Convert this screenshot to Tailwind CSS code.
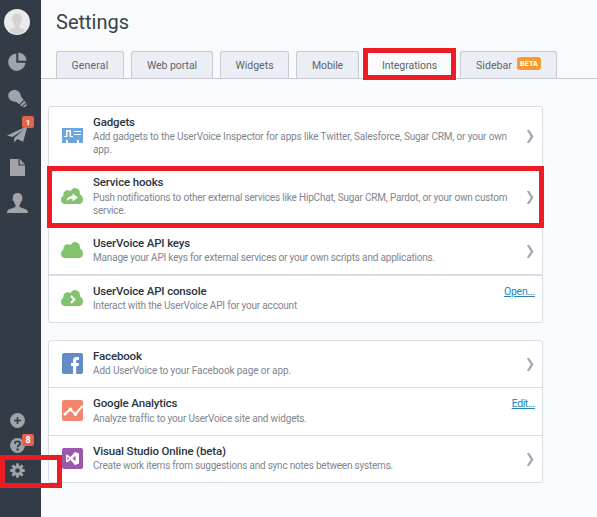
<!DOCTYPE html>
<html lang="en">
<head>
<meta charset="utf-8">
<title>Settings</title>
<script src="https://cdn.jsdelivr.net/npm/@tailwindcss/browser@4"></script>
</head>
<body class="w-[597px] h-[517px] overflow-hidden bg-[#f9fafc] font-['Roboto','Open_Sans',sans-serif] text-[#2f3a45]">
<svg class="hidden">
  <symbol id="cloud" viewBox="0 0 22 16"><path d="M4 16C1.500 16 0 14.300 0 11.800C0 9.700 1 8.300 2.500 7.800C2 4.800 3.500 2.300 6.500 2.200C7.900 2.100 8.900 2.500 9.800 3C10.600 1 12 0 14 0C17.300 0 19.400 2.800 18.900 6.400C20.900 7.200 22 9 22 11.500C22 14.200 20.600 16 18 16Z" fill="#84c36e"/></symbol>
  <symbol id="chev" viewBox="0 0 8 14"><path d="M.8 0H3.300L7.500 6.500L3.300 13H.8L4.600 6.500Z" fill="#a4a9b1"/></symbol>
</svg>
<div class="flex h-full">
  <nav class="w-[41px] shrink-0 bg-[#323b46] flex flex-col items-start">
    <svg class="mt-[9px] ml-1 w-[26px] h-[26px]" viewBox="0 0 26 26"><circle cx="13" cy="13" r="13" fill="#ebebeb"/><path d="M13 4.500C9.700 4.500 8 6.500 8.200 9.500C7.700 10.500 8.200 12 8.900 12.700C9.200 14.300 10 15.400 10.800 16.300V18.500L5.300 20.500C6 23 9 25.200 13 25.200S20 23 20.700 20.500L15.300 18.500V16.300C16.100 15.400 16.900 14.300 17.200 12.700C17.900 12 18.300 10.500 17.800 9.500C18 6.500 16.300 4.500 13 4.500Z" fill="#d3d3d3"/></svg>
    <svg class="mt-[17px] ml-2 w-[19px] h-[19px]" viewBox="0 0 19 19" fill="#a0a4a8"><path d="M8.300 1.500V10.700H17.500A8.700 8.700 0 1 1 8.300 1.500Z"/><path d="M10.300 .5A8.300 8.300 0 0 1 18.500 8.700H10.300Z"/></svg>
    <svg class="mt-[18px] ml-2 w-[19px] h-[19px]" viewBox="0 0 19 19" fill="#a0a4a8"><path d="M6.500 1C10 1 12.500 3.500 12.800 6.500C13.100 8.300 14.600 9.500 15.800 10.700L11.200 15.500C10 14 8.600 12.800 6.700 12.700C3 12.300 .2 9.800 .2 6.800C.2 3.500 3 1 6.500 1Z"/><path d="M16.300 11.700L17.900 13.200L13.700 17.600L12.100 16.200ZM18.500 14L18.700 16.300L16.800 18.300L14.500 18.200Z"/></svg>
    <div class="relative mt-[17px] ml-[7px] w-[21px] h-[18px]">
      <svg class="w-[21px] h-[18px]" viewBox="0 0 21 18" fill="#a0a4a8"><path d="M20.500 1L0 10.500L5.500 12L17 4.200L7.200 13V17.500L10.200 14L16.200 16.800Z"/></svg>
      <span class="absolute left-[15px] top-[-9px] w-3 h-3 rounded-[2px] bg-[#e2634b] text-white text-[8px] leading-[13px] font-bold text-center">1</span>
    </div>
    <svg class="mt-[16px] ml-[10px] w-[15px] h-[17px]" viewBox="0 0 15 17" fill="#a0a4a8"><path d="M0 0H8.500V6.500H15V17H0Z"/><path d="M9.700 0L15 5.400H9.700Z"/></svg>
    <svg class="mt-[17px] ml-[7px] w-[21px] h-5" viewBox="0 0 21 20" fill="#a0a4a8"><path d="M10.500 0C7.500 0 5.700 1.800 5.800 4.500C5.300 6.500 6 8 6.900 8.600C7.200 10.200 8 11.300 8.500 12V14L2.300 16.200C.7 16.900 0 18 0 20H21C21 18 20.300 16.900 18.700 16.200L12.500 14V12C13.100 11.300 13.800 10.200 14.100 8.600C15 8 15.700 6.500 15.200 4.500C15.300 1.800 13.500 0 10.500 0Z"/></svg>
    <svg class="mt-auto ml-[10px] w-[15px] h-[15px]" viewBox="0 0 15 15"><circle cx="7.500" cy="7.500" r="7.400" fill="#a0a4a8"/><path d="M7.500 4V11M4 7.500H11" stroke="#323b46" stroke-width="1.600"/></svg>
    <div class="relative mt-[10px] ml-[10px] w-[15px] h-[15px]">
      <svg class="w-[15px] h-[15px]" viewBox="0 0 15 15"><circle cx="7.500" cy="7.500" r="7.400" fill="#a0a4a8"/><path d="M4.800 5.700C4.900 2.500 10.200 2.700 10.100 5.600C10 7.300 7.700 7.400 7.600 9.200" fill="none" stroke="#323b46" stroke-width="1.900"/><circle cx="7.600" cy="11.500" r="1.200" fill="#323b46"/></svg>
      <span class="absolute left-3 top-[-4px] w-3 h-3 rounded-[2px] bg-[#e2634b] text-white text-[9px] leading-[13px] font-bold text-center">8</span>
    </div>
    <svg class="mt-[10px] mb-[39px] ml-[10px] w-[15px] h-[15px]" viewBox="0 0 15 15"><g fill="#a0a4a8"><circle cx="7.500" cy="7.500" r="5.200"/><g id="teeth"><rect x="6.100" y=".2" width="2.800" height="14.600" rx=".5"/><rect x=".2" y="6.100" width="14.600" height="2.800" rx=".5"/></g><use href="#teeth" transform="rotate(45 7.500 7.500)"/></g><circle cx="7.500" cy="7.500" r="2.300" fill="#323b46"/></svg>
  </nav>

  <main class="flex-1 min-w-0">
    <h1 class="h-[51px] pl-[15px] pt-[9px] text-[20px] leading-[26px] text-[#3a424c]">Settings</h1>
    <div class="h-7 flex gap-[7px] pl-[15px] border-b border-[#c7c9d1] text-[10.5px] leading-[27px] text-[#5f646b] [&>div]:text-center [&>div]:border [&>div]:border-b-0 [&>div]:border-[#c7c9d1] [&>div]:rounded-t-[3px] [&>div]:bg-[#ebeef4]">
      <div class="w-[68px] tracking-[0.17px]">General</div>
      <div class="w-[82px] tracking-[-0.05px]">Web portal</div>
      <div class="w-[69px]">Widgets</div>
      <div class="w-[63px] tracking-[-0.1px]">Mobile</div>
      <div class="w-[87px] h-7 !bg-[#f9fafc] tracking-[-0.06px]">Integrations</div>
      <div class="w-[97px] flex items-center pl-[15px]"><span class="tracking-[0.08px]">Sidebar</span><span class="ml-[5px] mb-[3px] w-6 h-[13px] rounded-[3px] bg-[#fb9a2a] text-white text-[7px] leading-[14px] font-black tracking-[0.18px]">BETA</span></div>
    </div>

    <section class="mt-[27px] ml-[7px] w-[495px] h-[217px] border border-[#dadde6] rounded-[3px] bg-white text-[10px] leading-[13px] text-[#7f858e] whitespace-nowrap [&_h2]:text-[11.5px] [&_h2]:leading-[14px] [&_h2]:mb-px [&_h2]:font-medium [&_h2]:text-[#2b353f] [&_h2]:tracking-[-0.16px]">
      <div class="h-[61px] border-b border-[#dadde6] flex pl-3 pt-2">
        <svg class="mt-[13px] ml-px w-[21px] h-[15px] shrink-0" viewBox="0 0 21 15"><path d="M0 0H21V15H17V12H15V15H6V12H4V15H0Z" fill="#6ca6e0"/><path d="M2 9V8H4V2H9V8H11V9H7.500V3.500H5.500V9Z" fill="#fff"/><path d="M12 3.500H19M12 6.500H19" stroke="#fff" stroke-width="1"/></svg>
        <div class="ml-[10px] flex-1"><h2>Gadgets</h2><p class="tracking-[-0.148px]">Add gadgets to the UserVoice Inspector for apps like Twitter, Salesforce, Sugar CRM, or your own<br>app.</p></div>
        <svg class="mr-[8px] mt-[15px] w-2 h-[14px]"><use href="#chev"/></svg>
      </div>
      <div class="h-[60px] border-b border-[#dadde6] flex pl-3 pt-[7px]">
        <svg class="mt-[13px] w-[22px] h-4 shrink-0"><use href="#cloud"/><path d="M5.500 13C6 9.500 8.500 8 11.500 8V5.500L17 9.500L11.500 13.300V10.800C9 10.600 7.500 11.300 5.500 13Z" fill="#fff"/></svg>
        <div class="ml-[10px] flex-1"><h2>Service hooks</h2><p class="pt-px tracking-[-0.181px]">Push notifications to other external services like HipChat, Sugar CRM, Pardot, or your own custom<br>service.</p></div>
        <svg class="mr-[8px] mt-[16px] w-2 h-[14px]"><use href="#chev"/></svg>
      </div>
      <div class="h-12 border-b-2 border-[#dadde6] flex pl-3 pt-2">
        <svg class="mt-[6px] w-[22px] h-4 shrink-0"><use href="#cloud"/></svg>
        <div class="ml-[10px] flex-1"><h2>UserVoice API keys</h2><p class="tracking-[-0.184px]">Manage your API keys for external services or your own scripts and applications.</p></div>
        <svg class="mr-[8px] mt-[9px] w-2 h-[14px]"><use href="#chev"/></svg>
      </div>
      <div class="h-[46px] flex pl-3 pt-2">
        <svg class="mt-[6px] w-[22px] h-4 shrink-0"><use href="#cloud"/><path d="M10 6L13.300 9.500L10 13" stroke="#fff" stroke-width="2" fill="none"/></svg>
        <div class="ml-[10px] flex-1"><h2>UserVoice API console</h2><p class="tracking-[-0.179px]">Interact with the UserVoice API for your account</p></div>
        <a class="mr-[7px] text-[10.5px] leading-[16px] tracking-[-0.257px] underline text-[#2583bd]">Open...</a>
      </div>
    </section>

    <section class="mt-[17px] ml-[7px] w-[495px] h-[143px] border border-[#dadde6] rounded-[3px] bg-white text-[10px] leading-[13px] text-[#7f858e] whitespace-nowrap [&_h2]:text-[11.5px] [&_h2]:leading-[14px] [&_h2]:mb-px [&_h2]:font-medium [&_h2]:text-[#2b353f] [&_h2]:tracking-[-0.15px]">
      <div class="h-[47px] border-b border-[#dadde6] flex pl-3 pt-2">
        <svg class="mt-1 ml-px w-[21px] h-[21px] shrink-0" viewBox="0 0 21 21"><rect width="21" height="21" rx="2" fill="#658bc7"/><path d="M11 21V13H9V10H11V7.500C11 5 12.500 4 14.500 4H17V7H15.300C14.500 7 14.200 7.400 14.200 8.200V10H17L16.600 13H14.200V21Z" fill="#fff"/></svg>
        <div class="ml-[10px] flex-1"><h2>Facebook</h2><p class="tracking-[-0.099px]">Add UserVoice to your Facebook page or app.</p></div>
        <svg class="mr-[8px] mt-[9px] w-2 h-[14px]"><use href="#chev"/></svg>
      </div>
      <div class="h-12 border-b border-[#dadde6] flex pl-3 pt-2">
        <svg class="mt-1 ml-px w-[21px] h-[21px] shrink-0" viewBox="0 0 21 21"><rect width="21" height="21" rx="2" fill="#f3846e"/><path d="M3 14L8.300 9.500L13.500 14L20.500 6" fill="none" stroke="#fff" stroke-width="2"/><g fill="#fff"><circle cx="3" cy="14" r="1.600"/><circle cx="8.300" cy="9.300" r="1.900"/><circle cx="13.500" cy="14" r="1.900"/></g></svg>
        <div class="ml-[10px] flex-1"><h2>Google Analytics</h2><p class="pt-px tracking-[-0.167px]">Analyze traffic to your UserVoice site and widgets.</p></div>
        <a class="mr-[7px] text-[10.5px] leading-[16px] tracking-[-0.4px] underline text-[#2583bd]">Edit...</a>
      </div>
      <div class="h-[46px] flex pl-3 pt-2">
        <svg class="mt-1 ml-px w-[21px] h-[21px] shrink-0" viewBox="0 0 21 21"><rect width="21" height="21" rx="2" fill="#9b59a9"/><path d="M4 7L5 6.500L8.500 9L13 4L17 5.500V15.500L13 17L8.500 12L5 14.500L4 14ZM5.500 8.700V12.300L7.300 10.500ZM10.500 10.500L13.500 13.200V7.800Z" fill="#fff" fill-rule="evenodd"/></svg>
        <div class="ml-[10px] flex-1"><h2>Visual Studio Online (beta)</h2><p class="tracking-[-0.212px]">Create work items from suggestions and sync notes between systems.</p></div>
        <svg class="mr-[8px] mt-[9px] w-2 h-[14px]"><use href="#chev"/></svg>
      </div>
    </section>
  </main>
</div>
<div class="absolute left-[363px] top-12 w-[93px] h-8 border-[5px] border-[#ed1c24]"></div>
<div class="absolute left-[47px] top-[166px] w-[497px] h-[62px] border-[5px] border-[#ed1c24]"></div>
<div class="absolute left-0 top-[455px] w-[62px] h-[33px] border-[5px] border-[#ed1c24]"></div>
</body>
</html>
